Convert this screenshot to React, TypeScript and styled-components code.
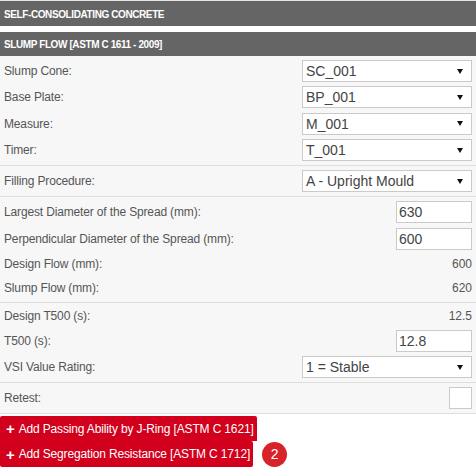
import { createGlobalStyle } from 'styled-components'
import styled from 'styled-components'

const GlobalStyle = createGlobalStyle`
  html, body {
    margin: 0;
    padding: 0;
    background: #fff;
  }
  body {
    font-family: 'Liberation Sans', Arial, sans-serif;
    color: #555;
  }
`

type Field =
  | { kind: 'select'; label: string; value: string }
  | { kind: 'input'; label: string; value: string }
  | { kind: 'text'; label: string; value: string; h?: number }
  | { kind: 'check'; label: string }

const groups: Field[][] = [
  [
    { kind: 'select', label: 'Slump Cone:', value: 'SC_001' },
    { kind: 'select', label: 'Base Plate:', value: 'BP_001' },
    { kind: 'select', label: 'Measure:', value: 'M_001' },
    { kind: 'select', label: 'Timer:', value: 'T_001' },
  ],
  [{ kind: 'select', label: 'Filling Procedure:', value: 'A - Upright Mould' }],
  [
    { kind: 'input', label: 'Largest Diameter of the Spread (mm):', value: '630' },
    { kind: 'input', label: 'Perpendicular Diameter of the Spread (mm):', value: '600' },
    { kind: 'text', label: 'Design Flow (mm):', value: '600', h: 20 },
    { kind: 'text', label: 'Slump Flow (mm):', value: '620', h: 20 },
  ],
  [
    { kind: 'text', label: 'Design T500 (s):', value: '12.5', h: 18 },
    { kind: 'input', label: 'T500 (s):', value: '12.8' },
    { kind: 'select', label: 'VSI Value Rating:', value: '1 = Stable' },
  ],
  [{ kind: 'check', label: 'Retest:' }],
]

const Page = styled.div`
  border-top: 1px solid #e4e4e4;
  width: 476px;
`

const Header = styled.div<{ $h: number }>`
  height: ${(p) => p.$h}px;
  background: #656565;
  color: #fff;
  font-size: 10px;
  font-weight: bold;
  letter-spacing: -0.4px;
  text-transform: uppercase;
  display: flex;
  align-items: center;
  padding: 1px 4px 0;
  box-sizing: border-box;
`

const Gap = styled.div`
  height: 6px;
  background: #fff;
`

const Panel = styled.div`
  background: #f7f7f7;
  border-bottom: 1px solid #dedede;
`

const Group = styled.div`
  display: flex;
  flex-direction: column;
  gap: 4.4px;
  padding: 4px;
  & + & {
    border-top: 1px solid #dedede;
  }
`

const Row = styled.div<{ $h?: number }>`
  height: ${(p) => p.$h ?? 22}px;
  display: flex;
  align-items: center;
  justify-content: space-between;
`

const Label = styled.span`
  font-size: 12px;
  letter-spacing: -0.15px;
  color: #555;
`

const Value = styled.span`
  font-size: 12px;
  color: #555;
`

const SelectBox = styled.div`
  width: 170px;
  height: 22px;
  box-sizing: border-box;
  background: #fff;
  border: 1px solid #cacaca;
  display: flex;
  align-items: center;
  justify-content: space-between;
  padding: 0 8px 0 3px;
  font-size: 14px;
  color: #444;
`

const InputBox = styled.div`
  width: 76px;
  height: 22px;
  box-sizing: border-box;
  background: #fff;
  border: 1px solid #cacaca;
  display: flex;
  align-items: center;
  padding: 0 2px;
  font-size: 14px;
  color: #444;
`

const CheckBox = styled.div`
  width: 23px;
  height: 22px;
  box-sizing: border-box;
  background: #fff;
  border: 1px solid #cacaca;
`

const Actions = styled.div`
  padding-top: 2px;
  display: flex;
  flex-direction: column;
  align-items: flex-start;
`

const ActionRow = styled.div`
  display: flex;
  align-items: center;
  gap: 9px;
`

const RedButton = styled.button<{ $first?: boolean }>`
  height: ${(p) => (p.$first ? 25 : 26)}px;
  background: #d2001c;
  color: #fff;
  border: none;
  border-radius: ${(p) => (p.$first ? '2px 2px 0 0' : '0 2px 2px 2px')};
  font-family: 'Liberation Sans', Arial, sans-serif;
  font-size: 12px;
  letter-spacing: -0.15px;
  padding: 0 3px 0 6px;
  display: flex;
  align-items: center;
  gap: 4px;
  cursor: pointer;
`

const Plus = styled.span`
  font-weight: bold;
  font-size: 15px;
  line-height: 1;
`

const Badge = styled.span`
  width: 25px;
  height: 25px;
  border-radius: 50%;
  background: #d8222a;
  color: #fff;
  font-size: 14px;
  display: flex;
  align-items: center;
  justify-content: center;
`

const Arrow = () => (
  <svg width="6" height="5" viewBox="0 0 6 5">
    <path d="M0 0 H6 L3 5 Z" fill="#111" />
  </svg>
)

const renderControl = (f: Field) => {
  switch (f.kind) {
    case 'select':
      return (
        <SelectBox>
          <span>{f.value}</span>
          <Arrow />
        </SelectBox>
      )
    case 'input':
      return <InputBox>{f.value}</InputBox>
    case 'text':
      return <Value>{f.value}</Value>
    case 'check':
      return <CheckBox />
  }
}

export default function App() {
  return (
    <>
      <GlobalStyle />
      <Page>
        <Header $h={25}>Self-Consolidating Concrete</Header>
        <Gap />
        <Header $h={24}>Slump Flow [ASTM C 1611 - 2009]</Header>
        <Panel>
          {groups.map((g, i) => (
            <Group key={i}>
              {g.map((f) => (
                <Row key={f.label} $h={f.kind === 'text' ? f.h : undefined}>
                  <Label>{f.label}</Label>
                  {renderControl(f)}
                </Row>
              ))}
            </Group>
          ))}
        </Panel>
        <Actions>
          <RedButton $first>
            <Plus>+</Plus>Add Passing Ability by J-Ring [ASTM C 1621]
          </RedButton>
          <ActionRow>
            <RedButton>
              <Plus>+</Plus>Add Segregation Resistance [ASTM C 1712]
            </RedButton>
            <Badge>2</Badge>
          </ActionRow>
        </Actions>
      </Page>
    </>
  )
}
